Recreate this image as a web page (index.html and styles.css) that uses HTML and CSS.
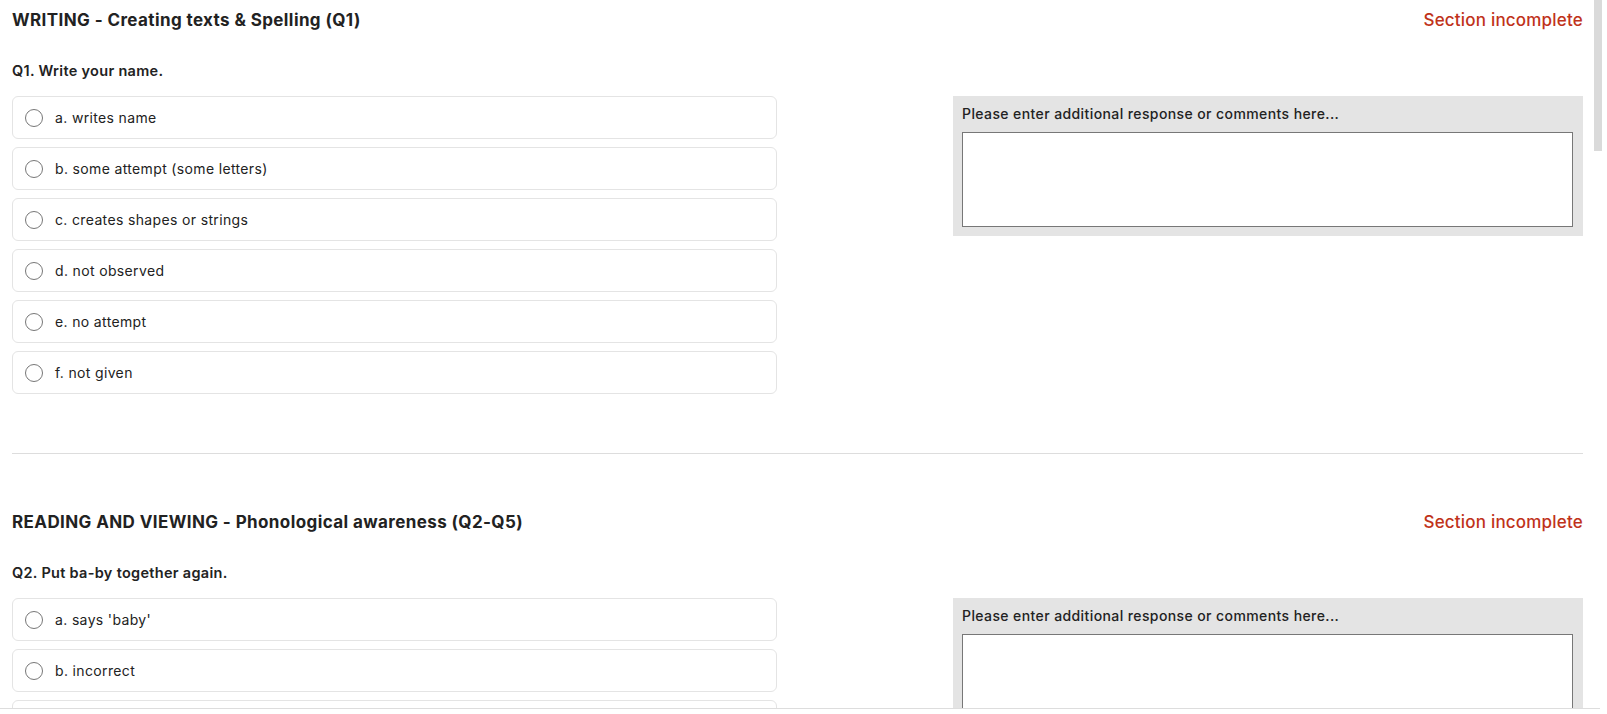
FILE: index.html
```html
<!DOCTYPE html>
<html lang="en">
<head>
    <meta charset="UTF-8" />
    <title>Assessment</title>
    <link rel="stylesheet" href="styles.css">
</head>
<body>
    <div class="page">
        <div class="section">
            <div class="section-head">
                <h3>WRITING - Creating texts &amp; Spelling (Q1)</h3>
                <span class="status">Section incomplete</span>
            </div>
            <div class="question">
                <p class="q-label">Q1. Write your name.</p>
                <div class="q-body">
                    <div class="options">
                        <label class="option"><span class="radio"></span>a. writes name</label>
                        <label class="option"><span class="radio"></span>b. some attempt (some letters)</label>
                        <label class="option"><span class="radio"></span>c. creates shapes or strings</label>
                        <label class="option"><span class="radio"></span>d. not observed</label>
                        <label class="option"><span class="radio"></span>e. no attempt</label>
                        <label class="option"><span class="radio"></span>f. not given</label>
                    </div>
                    <div class="comments">
                        <p>Please enter additional response or comments here...</p>
                        <textarea></textarea>
                    </div>
                </div>
            </div>
        </div>

        <hr class="divider">

        <div class="section">
            <div class="section-head">
                <h3>READING AND VIEWING - Phonological awareness (Q2-Q5)</h3>
                <span class="status">Section incomplete</span>
            </div>
            <div class="question">
                <p class="q-label">Q2. Put ba-by together again.</p>
                <div class="q-body">
                    <div class="options">
                        <label class="option"><span class="radio"></span>a. says 'baby'</label>
                        <label class="option"><span class="radio"></span>b. incorrect</label>
                        <label class="option"><span class="radio"></span>c. no attempt</label>
                        <label class="option"><span class="radio"></span>d. not given</label>
                    </div>
                    <div class="comments">
                        <p>Please enter additional response or comments here...</p>
                        <textarea></textarea>
                    </div>
                </div>
            </div>
        </div>
    </div>

    <div class="scroll-thumb"></div>
    <div class="bottom-bar"></div>
</body>
</html>
```

FILE: styles.css
```css
html, body {
    height: 100%;
    overflow: hidden;
}

body {
    margin: 0;
    font-family: Inter, "Open Sans", Arial, sans-serif;
    color: #222;
    background: #fff;
}

.page {
    padding: 0 24px 0 12px;
}

.section-head {
    display: flex;
    justify-content: space-between;
    align-items: center;
    height: 40px;
}

    .section-head h3 {
        margin: 0;
        font-size: 17px;
        font-weight: 700;
        letter-spacing: 0.4px;
    }

.status {
    color: #c0321a;
    font-size: 17px;
    font-weight: 500;
    letter-spacing: 0.2px;
}

.q-label {
    margin: 21px 0 15px;
    font-size: 14.5px;
    font-weight: 600;
    letter-spacing: 0.3px;
    line-height: 20px;
}

.q-body {
    display: flex;
    justify-content: space-between;
    align-items: flex-start;
}

.options {
    display: flex;
    flex-direction: column;
    gap: 8px;
    width: 765px;
}

.option {
    display: flex;
    align-items: center;
    gap: 12px;
    height: 43px;
    box-sizing: border-box;
    padding-left: 12px;
    border: 1px solid #e4e4e4;
    border-radius: 6px;
    font-size: 14px;
    letter-spacing: 0.35px;
}

.radio {
    width: 18px;
    height: 18px;
    box-sizing: border-box;
    border: 1px solid #777;
    border-radius: 50%;
}

.comments {
    width: 630px;
    box-sizing: border-box;
    padding: 8px 10px 9px 9px;
    background: #e4e4e4;
}

    .comments p {
        margin: 0 0 8px;
        font-size: 14px;
        font-weight: 500;
        letter-spacing: 0.4px;
        line-height: 20px;
    }

    .comments textarea {
        display: block;
        width: 100%;
        height: 95px;
        box-sizing: border-box;
        border: 1px solid #777;
        border-radius: 0;
        background: #fff;
        resize: none;
    }

.divider {
    margin: 59px 0 48px;
    border: none;
    border-top: 1px solid #ddd;
}

.scroll-thumb {
    position: fixed;
    top: 0;
    left: 1594px;
    width: 8px;
    height: 151px;
    background: #dadada;
}

.bottom-bar {
    position: fixed;
    left: 0;
    bottom: 0;
    width: 1600px;
    height: 5px;
    border-top: 1px solid #ddd;
    background: #fff;
}
```
